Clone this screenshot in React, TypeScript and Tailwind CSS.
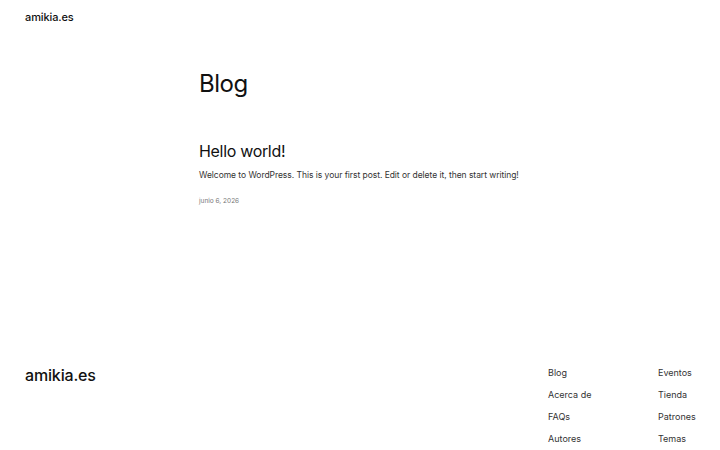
export default function App() {
  const ff = { fontFamily: "Inter, 'Noto Sans', sans-serif" };
  return (
    <div className="w-[720px] h-[450px] bg-white text-[#111] overflow-hidden flex flex-col" style={ff}>
      <header className="h-[34px] px-[25px] flex items-center">
        <span className="text-[11px] font-medium tracking-[-0.01em]">amikia.es</span>
      </header>
      <main className="pl-[199px] pt-[34px] h-[325px]">
        <h1 className="text-[24px] leading-[32px] font-normal tracking-[-0.02em]">Blog</h1>
        <div className="mt-[40px]">
          <h2 className="text-[16px] leading-[22px] font-normal tracking-[-0.02em]">Hello world!</h2>
          <p className="mt-[7px] text-[8.5px] leading-[12px] text-[#333] tracking-[-0.005em]">
            Welcome to WordPress. This is your first post. Edit or delete it, then start writing!
          </p>
          <p className="mt-[15px] text-[6.5px] leading-[10px] text-[#777]">junio 6, 2026</p>
        </div>
      </main>
      <footer className="px-[25px] flex items-start">
        <div className="flex-1 pt-[4px]">
          <span className="text-[16px] leading-[20px] font-medium tracking-[-0.01em]">amikia.es</span>
        </div>
        <div className="flex pt-[8px] text-[9px] text-[#333]">
          <ul className="w-[110px] flex flex-col gap-[10px] leading-[12px]">
            <li>Blog</li>
            <li>Acerca de</li>
            <li>FAQs</li>
            <li>Autores</li>
          </ul>
          <ul className="w-[37px] flex flex-col gap-[10px] leading-[12px]">
            <li>Eventos</li>
            <li>Tienda</li>
            <li>Patrones</li>
            <li>Temas</li>
          </ul>
        </div>
      </footer>
    </div>
  );
}
